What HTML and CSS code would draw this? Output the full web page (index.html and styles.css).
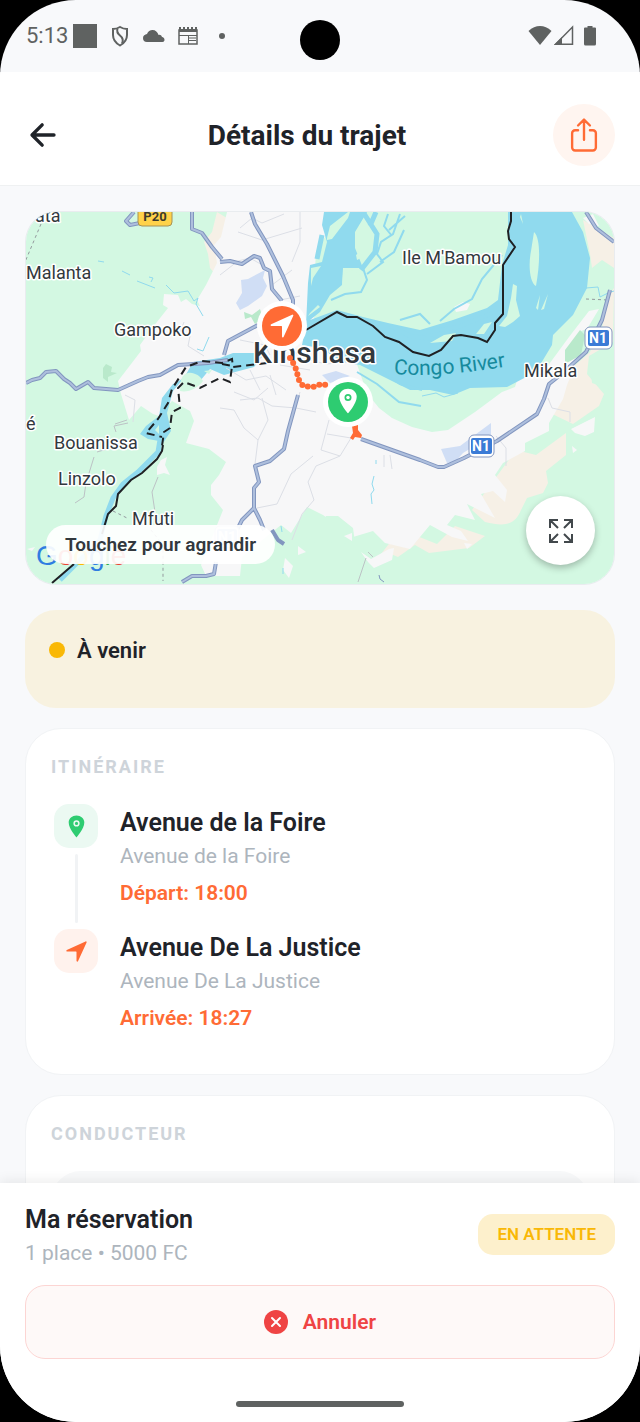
FILE: index.html
```html
<!DOCTYPE html>
<html lang="fr">

<head>
    <meta charset="UTF-8">
    <meta name="viewport" content="width=device-width, initial-scale=1.0">
    <title>Détails du trajet</title>
    <link rel="stylesheet" href="styles.css">
</head>

<body>
    <!-- Shared icons -->
    <svg class="sprite" width="0" height="0" aria-hidden="true">
        <symbol id="pin" viewBox="0 0 512 512">
            <path fill-rule="evenodd" d="M256 32C167.700 32 96 96.500 96 176c0 128 160 304 160 304s160-176 160-304c0-79.500-71.700-144-160-144zm0 224a64 64 0 1 1 64-64 64 64 0 0 1-64 64z"/>
            <circle cx="256" cy="192" r="32"/>
        </symbol>
        <symbol id="navigate" viewBox="0 0 512 512">
            <path d="M272 464a16 16 0 0 1-16-16.400V264a8 8 0 0 0-8-8H64.400a16.300 16.300 0 0 1-15.500-10.600 16 16 0 0 1 8.400-19.900l384-176.100a16 16 0 0 1 21.200 21.200l-176 384A16 16 0 0 1 272 464z"/>
        </symbol>
    </svg>

    <div class="phone">
        <div class="status-bar">
            <div class="status-left">
                <span class="clock">5:13</span>
                <span class="square"></span>
                <svg width="24" height="24" viewBox="0 0 24 24" fill="none" stroke="#5f6261" stroke-width="2">
                    <path d="M13 3c2.500 1.500 4.500 2 7 2v6c0 5-2.500 8-7 10.500-4.500-2.500-7-5.500-7-10.500V5c2.500 0 4.500-.5 7-2z"/>
                    <path d="M10.500 4.500c-1 3 0 5 2.500 7s4 4 2 8" stroke-width="2"/>
                </svg>
                <svg width="24" height="24" viewBox="0 0 24 24" fill="#5f6261">
                    <path d="M6 18a4 4 0 0 1-4-4c0-2.500 2-3.700 4-4 1-2.500 3-4 5.500-4 3 0 5.200 2 6 5 1.500-.5 3 .5 3.500 2 1.500.3 2.500 1.300 2.500 2.700 0 1.300-.8 2.300-2 2.300z"/>
                </svg>
                <svg width="24" height="24" viewBox="0 0 24 24" fill="none" stroke="#5f6261">
                    <rect x="4" y="6" width="18" height="14" stroke-width="1.500"/>
                    <path d="M4 6.500h18" stroke-width="3"/>
                    <path d="M4 4h18" stroke-width="2" stroke-dasharray="2 2"/>
                    <path d="M4 11.500h18M13.500 12v8M14 14h7M14 16.500h7"/>
                </svg>
                <span class="dot"></span>
            </div>
            <div class="status-right">
                <svg width="24" height="24" viewBox="0 0 24 24" fill="#5f6261">
                    <path d="M12 21 .5 7C4 3.500 8 2 12 2s8 1.500 11.500 5z"/>
                </svg>
                <svg width="20" height="24" viewBox="0 0 20 24">
                    <path d="M1.500 20.300h17V3z" fill="none" stroke="#5f6261" stroke-width="1.500"/>
                    <path d="M0 21 8 13v8z" fill="#5f6261"/>
                </svg>
                <svg class="battery" width="12" height="24" viewBox="0 0 12 24" fill="#5f6261">
                    <path d="M3.500 2h5v1.500H11a1 1 0 0 1 1 1V20a1.500 1.500 0 0 1-1.500 1.500h-9A1.500 1.500 0 0 1 0 20V4.500a1 1 0 0 1 1-1h2.500z"/>
                </svg>
            </div>
            <span class="camera"></span>
        </div>

        <header class="header">
            <button class="back" aria-label="Retour">
                <svg width="36" height="36" viewBox="0 0 512 512" fill="none" stroke="#1f2329" stroke-width="48" stroke-linecap="round" stroke-linejoin="round">
                    <path d="M244 400 100 256l144-144M120 256h292"/>
                </svg>
            </button>
            <h1>Détails du trajet</h1>
            <button class="share" aria-label="Partager">
                <svg width="38" height="38" viewBox="0 0 512 512" fill="none" stroke="#ff6b35" stroke-width="32" stroke-linecap="round" stroke-linejoin="round">
                    <path d="M336 192h40a40 40 0 0 1 40 40v192a40 40 0 0 1-40 40H136a40 40 0 0 1-40-40V232a40 40 0 0 1 40-40h40M336 128l-80-80-80 80M256 321V48"/>
                </svg>
            </button>
        </header>

        <main class="content">
            <section class="map">
                <svg class="map-canvas" viewBox="26 212 588 372" role="img" aria-label="Carte du trajet">
                    <rect x="26" y="212" width="588" height="372" fill="#d3f8e2"/>

                    <!-- Built-up areas -->
                    <g fill="#f6f0e6">
                        <path d="M217 212l-5 20-8 10 4 12 2 14 10 12 10-60z"/>
                        <path d="M583 220l31 18v30l-12-8-10 8-2-14z"/>
                        <path d="M614 288l-7 10-5 30-12 24-18 16-14 4-10 40 25 12 26-18 5-12-17-20 2-18 24-14z"/>
                        <path d="M395 536l12-3 15 5 15 6 18-18 30 10-16 12-40 5-14-8-17 12-12-5-5 2z"/>
                        <path d="M485 522c20 5 30 3 36-12l6-12 16-5 5-10-2-12 20-16v-22l-30 22-20-5-44 60z"/>
                    </g>
                    <path fill="#f7f7f8" d="M227 212l-6 25-7 8 3 18-11 22-9 15 3 6-8-2-6-5-5 3-3-7-14-1-1 11 5 3-15 19-13 18 1 6-13 17-10 13 3 13 8 26 12-14 12 8 6 2 13-15 18 10 4 10-8 22 23 6 17 13-7 13-8 10v10l12 15-8 20-14 35 5 11h34l2-19 24-20 15-12 10 8 16-26 16 8 14 10 2 9 14 3 20-6 12 12 25 6 20-24 22 12 16 4-7-10-14-6 8-10 20 5-8-16 28 14-14-24 12-3 12 11 2-12-12-15 8-12 22-12v-8l24-12v-8l14-24 4-14 8-20 6-34 6-2 12-20-10 2-20 26-22 30-24-6-8 26-13 5-27 20-27 18-16 2-20-5-20-9-13-10-12-15-14-40-20-8-20-22 4-20 3-22-5-10 1-20 11-17 7-25z"/>
                    <path fill="#f7f7f8" d="M463 302l7 2-3 6-11 2-2-5zM571 429l14-7 10-5-1 15-9 4-10-3zM583 218l10-4 6 12-10-2zM572 446l5 4-4 3z"/>
                    <g fill="#d3f8e2">
                        <path d="M326 516l12 0 15 12 2 14-20 3-18-10zM300 534l16 10-10 12-12-8z"/>
                        <path d="M614 355l-24 8 2 20 22 8z"/>
                    </g>
                    <g fill="#f7f7f8">
                        <path d="M285 558l8 8-4 12-6-8zM344 536l8-3v8zM298 546l8 6-8 3zM361 552l10 7 18-10 5-1-2 12-18 8-6-6zM464 543l8 1-5 5zM27 549l8-2-3 4z"/>
                        <path d="M157 467l4-7 6-3-2 8 5 10-6-2-7 2z"/>
                    </g>
                    <path fill="#d0def5" d="M241 280l7-1 17-9-2 8 4 8-5 10-14 10-8 4-4-7 6-10zM441 449l19-3 31-23v13l-28 17-8 9-8 1zM322 375l14-4 14 5-20 7z"/>
                    <path fill="#b9e9cb" d="M103 368l3-4 6 3-1 5 6 1-9 4v5l-5-4zM244 312l8 3 8-6 3 9-8 6-4-7-6 2zM565 350l15-20 5 5-4 20-16 9z"/>

                    <!-- Congo river -->
                    <g fill="#90daee">
                        <path d="M324 212H367L355 232V248L363 268H343L342 285 330 295 320 312 310 320 337 310 363 317 388 323 420 330 453 320 487 308 498 300 502 265 508 245V212H572L583 232 590 258 587 288 573 315 553 335 552 345 540 365 530 375 507 387 470 388 453 395 430 390 410 390 390 380 360 365 343 362 320 348 302 345 306 325 308 283 310 265 322 262 327 242 322 225z"/>
                        <path d="M265 353h-32l-13 5-27 4-9 16-11 6-11 14-3 18-13 10-6 8 8 5 11 2 4 2 8-12-4-18 6-22 10-12 17 2 10-12 14 6 30-8z"/>
                    </g>
                    <path fill="none" stroke="#90daee" stroke-width="5" d="M160 440l-2 12-20 20-15 12-10 14-7 18-6 24-40 40M363 212l14 22-2 18-14 18M370 226l6-14M322 235l-5 24"/>
                    <path fill="none" stroke="#90daee" stroke-width="2" d="M400 214l-7 20-12 8-4 12 6 8-16 12M380 262l14-10 10-22M363 268l4 12-6 12-16 2-14 6M388 214l-4 12 8 10M502 255l-20 24-10 20-18 10-14 12M357 372l20 12 22 18 22 4M389 230l16-14M400 320l20-6 10 10M380 370l20 14 22 6"/>
                    <path fill="none" stroke="#90daee" stroke-width="4" d="M420 333l38-6 34-14M390 326l20 10 30 4"/>
                    <path fill="none" stroke="#90daee" stroke-width="1" d="M98 261l6 1M122 271l8 4M137 281l18 7M149 277l4 1-2 4M166 285l8 8 14-2 6 10 4-3-2 6 7 12M209 337l-6 14-6-2M374 476l-2 8 2 6-3 4 1 10M376 460v4M422 396l14-3 8 4 14-4M586 288l12-1 2 10 8-4 6-2M281 526l1 6M283 568v6"/>
                    <g fill="#d3f8e2">
                        <path d="M327 238l3-12 18-14h2l-2 6-16 21-5 1zM356 255l4-3 3 5-6 3zM311 268l10-2-8 12-2 8zM343 274l10-4 9 6-4 12-16 1z"/>
                        <path d="M534 232c7 6 6 32 2 54-6-3-8-20-5-35zM513 284l4 2-1 14 4 16-7 6-8 5-6-1 8-10 4-18zM540 295l-2 15-2-2zM548 294l-4 15-3 1zM310 313l8-8 2 2-12 9zM521 214l2 10-3-7z"/>
                        <path d="M181 380c4-12 18-7 22 1-5 7-15 12-23 10zM204 371l8-1-3 4zM476 334l8-10 8-2-8 12zM430 343l14-8 12-2-4 8zM155 430l4-5v9z"/>
                    </g>

                    <!-- Minor roads -->
                    <g fill="none" stroke="#dcdfe6" stroke-width="1">
                        <path d="M220 275l18-14 12-3 14 8M238 232l24 8 40-12M240 228l12-10 10 5 22-9M300 212v30l-8 20M272 285l20-15M280 300l20-4M190 336l-2 10 16 10M125 395l10 5-2 22M184 322l-4 10M226 368l20 12 20-4 20 14M234 392l20 8 14-12M290 350l20 10 16 4 22-2"/>
                        <path d="M220 408l14 2 10 18 14 12-3 24M258 440l10-20-6-22M240 400l18-2 14 8 24 2 20 4M329 420l-8 30 19 6 11-18-24-4M340 456l-24 10-8 16 6 18-12 14-10 26M257 508l20-4 14-30 22-18M384 455v12M390 455l2 14M300 392l-6 20M356 394l6 26M496 436l10 12v18M548 398l4 10 18 4v10M250 370l10 20M270 375l6 20M280 365l30 5M240 340l25 5 5 10"/>
                    </g>
                    <path fill="none" stroke="#bcc2c5" stroke-width="1" d="M75 503l9-6 2-14 8-26M97 452l20-6M115 424l12-4M116 432l-2-6 14-3M158 477l-6 15 3 20M366 558l-8 24M368 552l5 5"/>
                    <path fill="none" stroke="#93999d" stroke-width="1" stroke-dasharray="3 3" d="M41 224l-16 38M113 511l16 8M151 530l12 15v36M586 299l22 1"/>

                    <!-- Highways, casing first -->
                    <g fill="none" stroke-linejoin="round">
                        <path stroke="#8296bf" stroke-width="4" d="M26 383l6-3 8-2 6-6 10-1 8 8 6 4 6 6 12-7 6 6 12 1 12 1 20-9 10-4 12-2 18-10 30-2 20-3M251 212l4 12 12 20 16 32 10 24v10M192 212v17l10 4 10 14 10 12M220 262l10-1 12 3 12-8 6 2 4 10 6 3 2 18 10 12M258 325l-30 16-4 14M298 395l-10 36-4 18-14 12-15 5 4 16-5 6v20l-12 12-5 10M254 508l6 12 4 10M272 530l6 10 6 4M182 582l10-6h14l8-2 2-12M134 212l-8 9 4 4 10-2M361 439l59 21 18 7h6l20-9 33-17 40-27 7-15 5-15 10-8 27-24 16-32 8-30M586 212l10 16 18 14"/>
                        <path stroke="#aebfdd" stroke-width="2" d="M26 383l6-3 8-2 6-6 10-1 8 8 6 4 6 6 12-7 6 6 12 1 12 1 20-9 10-4 12-2 18-10 30-2 20-3M251 212l4 12 12 20 16 32 10 24v10M192 212v17l10 4 10 14 10 12M220 262l10-1 12 3 12-8 6 2 4 10 6 3 2 18 10 12M258 325l-30 16-4 14M298 395l-10 36-4 18-14 12-15 5 4 16-5 6v20l-12 12-5 10M254 508l6 12 4 10M182 582l10-6h14l8-2 2-12M134 212l-8 9 4 4 10-2M361 439l59 21 18 7h6l20-9 33-17 40-27 7-15 5-15 10-8 27-24 16-32 8-30M586 212l10 16 18 14"/>
                        <path stroke="#8296bf" stroke-width="1" d="M379 575l1 4 4 3"/>
                    </g>

                    <!-- Border between the two countries -->
                    <g fill="none" stroke="#1f2124" stroke-width="2">
                        <path d="M306 330l31-18 10 5h10l16 9 12 11 14 5 14 10 16 4 12-6 12-14 8-1 17 3 9 4 8-12v-7l8-9V265l12-18-6-8-1-8 3-10v-9M163 445l-1 6-5 8-15 14-11 7-13 14-2 12-8 8-6 20M74 564l-22 19"/>
                        <path stroke-dasharray="8 5" d="M267 363l-34 4-1-8-10 4-20-2-16 6-14 22-4 14-10 16-12 14 16 4M222 364l10 2-2 16-10-4-20 10-16-6-6 6 2 20-8 4-2 16-6 4-2 14"/>
                    </g>

                    <g class="shield">
                        <rect x="138" y="206" width="34" height="20" rx="4" fill="#ffd24a" stroke="#a69256"/>
                        <text class="shield-dark" x="155" y="221">P20</text>
                        <rect x="585" y="327" width="27" height="22" rx="5" fill="#fff" stroke="#8296bf"/>
                        <rect x="588" y="330" width="21" height="16" rx="2" fill="#3b7bd6"/>
                        <text x="598" y="343">N1</text>
                        <rect x="469" y="435" width="25" height="22" rx="5" fill="#fff" stroke="#8296bf"/>
                        <rect x="471" y="438" width="21" height="16" rx="2" fill="#3b7bd6"/>
                        <text x="481" y="451">N1</text>
                        <rect x="215" y="526" width="24" height="22" rx="5" fill="#fff" stroke="#c3cbdb"/>
                        <rect x="217" y="529" width="20" height="16" rx="2" fill="#b5cbed"/>
                        <text x="227" y="542">N1</text>
                    </g>

                    <path id="river-name" fill="none" d="M394 374Q440 378 516 365"/>
                    <text class="water-name"><textPath href="#river-name">Congo River</textPath></text>

                    <g class="place">
                        <text x="35" y="222">ata</text>
                        <text x="26" y="279">Malanta</text>
                        <text x="114" y="336">Gampoko</text>
                        <text x="402" y="264">Ile M'Bamou</text>
                        <text x="524" y="377">Mikala</text>
                        <text x="26" y="430">é</text>
                        <text x="54" y="449">Bouanissa</text>
                        <text x="58" y="485">Linzolo</text>
                        <text x="132" y="525">Mfuti</text>
                        <text class="city" x="253" y="363">Kinshasa</text>
                    </g>

                    <text class="google" x="36" y="565"><tspan fill="#2f7de1">G</tspan><tspan fill="#ea4335">o</tspan><tspan fill="#fbbc05">o</tspan><tspan fill="#2f7de1">g</tspan><tspan fill="#34a853">l</tspan><tspan fill="#ea4335">e</tspan></text>

                    <!-- Trip -->
                    <path fill="none" stroke="#ff6b35" stroke-width="6" stroke-linecap="round" stroke-dasharray="0 6" d="M290 358l5 8 4 14 4 6 10 1 8-3 10 2"/>
                    <path fill="#ff6b35" d="M352 426l6-1v5l4 5-1 3-6-1-2 3-3-2 3-5z"/>
                    <circle cx="282" cy="326" r="25" fill="#fff"/>
                    <circle cx="282" cy="326" r="20" fill="#ff6b35"/>
                    <use href="#navigate" x="268" y="312" width="28" height="28" fill="#fff"/>
                    <circle cx="348" cy="402" r="25" fill="#fff"/>
                    <circle cx="348" cy="402" r="20" fill="#2ecc71"/>
                    <use href="#pin" x="334" y="387" width="28" height="28" fill="#fff"/>
                </svg>
                <span class="map-hint">Touchez pour agrandir</span>
                <button class="expand" aria-label="Agrandir la carte">
                    <svg width="26" height="26" viewBox="0 0 26 26" fill="none" stroke="#42484c" stroke-width="2">
                        <path d="M2 10V2h8M2 2l8 8M16 2h8v8M24 2l-8 8M2 16v8h8M2 24l8-8M24 16v8h-8M24 24l-8-8"/>
                    </svg>
                </button>
            </section>

            <section class="trip-status">
                <span class="status-dot"></span>
                <strong>À venir</strong>
            </section>

            <section class="card">
                <h2>Itinéraire</h2>
                <ol class="route">
                    <li>
                        <div class="marker">
                            <span class="marker-icon start"><svg width="25" height="25"><use href="#pin"/></svg></span>
                            <span class="line"></span>
                        </div>
                        <div class="stop">
                            <h3>Avenue de la Foire</h3>
                            <p>Avenue de la Foire</p>
                            <p class="time">Départ: 18:00</p>
                        </div>
                    </li>
                    <li>
                        <div class="marker">
                            <span class="marker-icon end"><svg width="25" height="25"><use href="#navigate"/></svg></span>
                        </div>
                        <div class="stop">
                            <h3>Avenue De La Justice</h3>
                            <p>Avenue De La Justice</p>
                            <p class="time">Arrivée: 18:27</p>
                        </div>
                    </li>
                </ol>
            </section>

            <section class="card">
                <h2>Conducteur</h2>
                <div class="driver"></div>
            </section>
        </main>

        <footer class="booking">
            <div class="booking-row">
                <div>
                    <h3>Ma réservation</h3>
                    <p>1 place • 5000 FC</p>
                </div>
                <span class="badge">EN ATTENTE</span>
            </div>
            <button class="cancel">
                <svg width="24" height="24" viewBox="0 0 24 24">
                    <circle cx="12" cy="12" r="12" fill="#ef4444"/>
                    <path d="M8 8l8 8M16 8l-8 8" stroke="#fff" stroke-width="2" stroke-linecap="round"/>
                </svg>
                Annuler
            </button>
            <span class="home-bar"></span>
        </footer>
    </div>
</body>

</html>
```

FILE: styles.css
```css
* {
    box-sizing: border-box;
}

body {
    margin: 0;
    background-color: #000;
    color: #1f2329;
    font-family: Roboto, "Liberation Sans", sans-serif;
}

h1, h2, h3, p {
    margin: 0;
}

button {
    padding: 0;
    border: none;
    background: none;
    font-family: inherit;
    cursor: pointer;
}

svg {
    display: block;
    flex-shrink: 0;
}

.sprite {
    position: absolute;
}

.phone {
    display: flex;
    flex-direction: column;
    height: 100vh;
    overflow: hidden;
    border-radius: 76px;
    background-color: #f8f9fb;
}

/* Status bar */
.status-bar {
    position: relative;
    display: flex;
    flex-shrink: 0;
    justify-content: space-between;
    align-items: center;
    height: 72px;
    padding: 0 44px 0 26px;
}

.status-left {
    display: flex;
    align-items: center;
    gap: 10px;
}

.clock {
    width: 37px;
    color: #5f6261;
    font-size: 22px;
    line-height: 26px;
    white-space: nowrap;
}

.square {
    width: 24px;
    height: 24px;
    background-color: #5f6261;
}

.dot {
    width: 6px;
    height: 6px;
    margin-left: 10px;
    border-radius: 50%;
    background-color: #5f6261;
}

.status-right {
    display: flex;
    align-items: center;
    gap: 2px;
}

.battery {
    margin-left: 8px;
}

.camera {
    position: absolute;
    top: 20px;
    left: 50%;
    width: 40px;
    height: 40px;
    border-radius: 50%;
    background-color: #000;
    transform: translateX(-50%);
}

/* Header */
.header {
    display: flex;
    flex-shrink: 0;
    justify-content: space-between;
    align-items: center;
    height: 114px;
    padding: 12px 25px 0;
    border-bottom: 1px solid #eff1f2;
    background-color: #fff;
}

.header h1 {
    padding-top: 2px;
    font-size: 28px;
    font-weight: 700;
    line-height: 36px;
}

.share {
    display: flex;
    justify-content: center;
    align-items: center;
    width: 62px;
    height: 62px;
    border-radius: 50%;
    background-color: #fff5f0;
}

/* Content */
.content {
    flex: 1;
    min-height: 0;
    padding: 25px 25px 0;
    overflow-y: auto;
    scrollbar-width: none;
}

.map {
    position: relative;
    margin-bottom: 25px;
    overflow: hidden;
    border: 1px solid #e9ecef;
    border-radius: 31px;
}

.map-canvas {
    width: 100%;
    height: auto;
}

.place text {
    fill: #32383d;
    font-size: 18px;
    paint-order: stroke;
    stroke: #fff;
    stroke-width: 3px;
    stroke-linejoin: round;
}

.place .city {
    font-size: 30px;
    font-weight: 500;
}

.water-name {
    fill: #168a9d;
    font-size: 21px;
}

.shield text {
    fill: #fff;
    font-size: 14px;
    font-weight: 700;
    text-anchor: middle;
}

.shield .shield-dark {
    fill: #3c3a2c;
    font-size: 13px;
}

.google {
    font-family: "Liberation Sans", Arial, sans-serif;
    font-size: 28px;
}

.map-hint {
    position: absolute;
    bottom: 20px;
    left: 20px;
    padding: 0 19px;
    border-radius: 20px;
    background-color: rgba(255, 255, 255, 0.92);
    color: #32383d;
    font-size: 19px;
    font-weight: 600;
    line-height: 39px;
}

.expand {
    position: absolute;
    right: 19px;
    bottom: 19px;
    display: flex;
    justify-content: center;
    align-items: center;
    width: 69px;
    height: 69px;
    border-radius: 50%;
    background-color: #fff;
    box-shadow: 0 3px 7px rgba(0, 0, 0, 0.25);
}

.trip-status {
    display: flex;
    align-items: flex-start;
    gap: 12px;
    height: 98px;
    margin-bottom: 20px;
    padding: 26px 24px;
    border-radius: 31px;
    background-color: #f8f2e0;
    font-size: 22px;
    line-height: 30px;
}

.trip-status strong {
    font-weight: 600;
}

.status-dot {
    width: 16px;
    height: 16px;
    margin-top: 6px;
    border-radius: 50%;
    background-color: #f9b806;
}

.card {
    margin-bottom: 20px;
    padding: 25px 25px 20px;
    border: 1px solid #f1f3f5;
    border-radius: 36px;
    background-color: #fff;
}

.card h2 {
    margin-bottom: 24px;
    color: #ced4da;
    font-size: 18px;
    font-weight: 700;
    line-height: 26px;
    letter-spacing: 2px;
    text-transform: uppercase;
}

.route {
    margin: 0;
    padding: 0;
    list-style: none;
}

.route li {
    display: flex;
    gap: 19px;
}

.marker {
    display: flex;
    flex-direction: column;
    align-items: center;
    width: 50px;
}

.marker-icon {
    display: flex;
    justify-content: center;
    align-items: center;
    width: 44px;
    height: 44px;
    border-radius: 15px;
}

.start {
    background-color: #ebf9f2;
    fill: #2ecc71;
}

.end {
    background-color: #fff2ed;
    fill: #ff6b35;
}

.line {
    flex: 1;
    width: 3px;
    margin: 6px 0;
    border-radius: 2px;
    background-color: #f1f3f5;
}

.stop {
    padding-bottom: 22px;
}

.stop h3,
.booking h3 {
    font-size: 25px;
    font-weight: 600;
    line-height: 38px;
}

.stop p,
.booking p {
    color: #adb5bd;
    font-size: 21px;
    line-height: 28px;
}

.stop .time {
    margin-top: 9px;
    color: #ff6b35;
    font-weight: 600;
}

.driver {
    height: 120px;
    border-radius: 30px;
    background-color: #f8f9fa;
}

/* Booking */
.booking {
    position: relative;
    display: flex;
    flex-direction: column;
    flex-shrink: 0;
    padding: 18px 25px 15px;
    background-color: #fff;
    box-shadow: 0 -2px 12px rgba(0, 0, 0, 0.08);
}

.booking-row {
    display: flex;
    justify-content: space-between;
    align-items: center;
    margin-bottom: 18px;
}

.badge {
    padding: 0 19px;
    border-radius: 15px;
    background-color: #fdf0cc;
    color: #f9b806;
    font-size: 17px;
    font-weight: 600;
    line-height: 41px;
}

.cancel {
    display: flex;
    justify-content: center;
    align-items: center;
    gap: 15px;
    height: 74px;
    margin-bottom: 42px;
    border: 1px solid #fcd5d3;
    border-radius: 20px;
    background-color: #fef9f8;
    color: #ef4444;
    font-size: 21px;
    font-weight: 600;
}

.home-bar {
    align-self: center;
    width: 168px;
    height: 6px;
    border-radius: 3px;
    background-color: #5f6261;
}
```
